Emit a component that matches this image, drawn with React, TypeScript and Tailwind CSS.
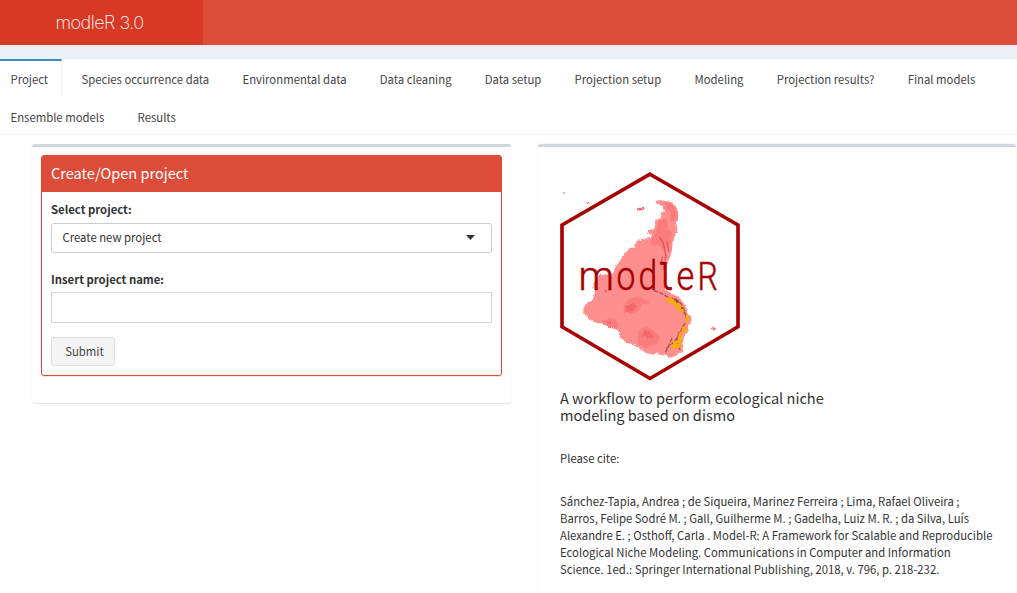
import React from "react";

const tabs = [
  "Project",
  "Species occurrence data",
  "Environmental data",
  "Data cleaning",
  "Data setup",
  "Projection setup",
  "Modeling",
  "Projection results?",
  "Final models",
  "Ensemble models",
  "Results",
];

function Header() {
  return (
    <header className="flex h-[45px] bg-[#dd4b39]">
      <div className="flex w-[203px] items-center justify-center bg-[#d73925] pr-1 text-white">
        <span className="font-['Inter','Liberation_Sans',sans-serif] text-[18px] font-extralight tracking-[-0.5px]">modleR 3.0</span>
      </div>
    </header>
  );
}

function Tabs() {
  return (
    <nav className="flex h-[76px] flex-wrap content-start gap-x-[8.75px] border-b border-[#f4f4f4]">
      {tabs.map((label, i) => (
        <a
          key={label}
          className={
            "flex h-[38px] items-center border-t-2 border-r pl-[10.5px] pr-[13px] whitespace-nowrap text-[#444] " +
            (i === 0 ? "border-t-[#3c8dbc] border-r-[#f4f4f4]" : "border-transparent")
          }
        >
          <span className="pt-px">{label}</span>
        </a>
      ))}
    </nav>
  );
}

function ProjectForm() {
  return (
    <section className="h-[259px] w-[479px] rounded-[3px] border-t-[3px] border-[#d2d6de] px-[9px] pt-2 shadow-[0_1px_1px_rgba(0,0,0,0.1),0_0_1px_rgba(0,0,0,0.1)]">
      <div className="h-[221px] rounded-[3px] border border-[#dd4b39] shadow-[0_1px_1px_rgba(0,0,0,0.1)]">
        <h3 className="flex h-9 items-center bg-[#dd4b39] px-[9px] pb-[3px] text-[14.55px] text-white">Create/Open project</h3>
        <div className="flex flex-col items-start px-[9px] pt-2">
          <label className="h-[23px] font-bold leading-[18px]">Select project:</label>
          <div className="flex h-[30px] w-full items-center justify-between rounded-[3px] border border-[#ccc] pl-[10.5px] pr-4 pb-px">
            <span>Create new project</span>
            <svg width="9" height="5" viewBox="0 0 9 5"><path d="M0 0h9L4.5 5z" fill="#333" /></svg>
          </div>
          <label className="mt-[17px] h-[22px] font-bold leading-[18px]">Insert project name:</label>
          <input className="h-[31px] w-full border border-[#d2d6de] px-3 outline-none" />
          <button className="mt-[14px] h-[29px] w-16 rounded-[3px] border border-[#ddd] bg-[#f4f4f4] pl-[3px] text-[#444]">Submit</button>
        </div>
      </div>
    </section>
  );
}

function Logo() {
  return (
    <svg width="180" height="209" viewBox="0 0 180 209" className="block">
      <filter id="coast" x="-5%" y="-5%" width="110%" height="110%">
        <feTurbulence type="fractalNoise" baseFrequency="0.2" numOctaves="2" seed="4" />
        <feDisplacementMap in="SourceGraphic" scale="9" xChannelSelector="R" yChannelSelector="G" />
      </filter>
      <g transform="translate(-10 -7) scale(0.33333)">
        <g filter="url(#coast)">
          <path
            d="M318 108l17-4 8 3 19 3 16 15 7 15-1 20-6 14 5 20-8 18-7 22-2 22-6 20-8 20-5 18 0 26-2 35 17 10 23 10 15 16 10 20 2 16 12 8 0 14-9 14-1 16-12 14-4 26 2 20-12 4-10 10-18 5-15-10-10 4-15-8-10 5-20-4-20-13-20-13-25-7-15-15-5-20-20-10-25-12-20 0-25-13-15-20 0-13 15-17 13-5 7-25-5-15 3-20 12-18 25 0 20-4 6-18 14-20 15-22 15-16 18-2-6-7 10-13 18-6 20-2 8-10-16-2 3-12 17-2 4-16-1-12 13-3 7-10-5-7 12-6-7-17-20-10z"
            fill="#ff8f8f"
          />
          <path
            d="M342 114l22 0 14 14 2 24-10 20-10-10 4-20-14-12zM325 168l22-8 8 26-16 14-22-4zM304 222l16-24 30-8 18 14-6 30-12 14-12 10-10-18-24 0zM222 420l14-18 34-8 14 12 12 0 0 10-18 2-12 20-24 8-22-6zM152 472l24-12 20 2 12 18-8 10-18 0zM264 500l16-14 20 2 18 16 12 14-8 18-18 4-20 10-20-14z"
            fill="#fb7b7d"
          />
          <path
            d="M258 131l12-3 14 1-4 6-16 2zM106 111l10 2 6 5-8-1zM480 490l10-3 7 2 1 9-8-4zM40 84h3v3h-3zM228 424l24-10 8 10-10 14-22 4zM284 496l14 2 14 18-12 4-16-8-12 4zM170 466l14 6-4 8zM164 374l6-2 2 10-6 2z"
            fill="#f5686b"
          />
        </g>
        <path
          d="M328 216l10 14 6 24 4 22-4 10M338 274l-4 16 10 8-4 16M352 230l4 30"
          fill="none" stroke="#df565b" strokeWidth="4"
        />
        <path
          d="M312 377l22 8 20 12 24 6 16 14 8 16 6 22-2 18-10 16-6 18-12 16-12 14-20 16M366 520l-20 44M388 500l-8 24 10 30"
          fill="none" stroke="#b04b50" strokeWidth="4" strokeDasharray="13 4"
        />
        <path d="M372 400l14 8 2 14 14 10 2 14-12-6-6-14-14-8z" fill="#9c4148" />
        <path
          d="M346 398h6v5h6v-6h8v4h6v6h6v6h10v6h5v13h8v12h-9v-5h-6v-5h-6v-9h-8v-7h-10v-6h-10v-6h-6zM409 444h4v7h4v16h-7v6h-5v-13h4zM398 485h12v13h-6v5h-9v-10h3zM386 503h8v8h3v10h-3v24h-8v-11h-7v-8h6zM370 527h10v9h6v12h-9v5h-7v-5h-7v-10h7z"
          fill="#f5ae08"
        />
      </g>
      <path d="M90 2.200L178 53v101.800L90 206.500 2 154.800V53z" fill="none" stroke="#a60000" strokeWidth="3.6" />
      <g fontFamily="Roboto, sans-serif" fontWeight="300" fontSize="40" fill="#a60000" stroke="#a60000" strokeWidth="0.5">
        <text transform="translate(18.5 118)">m</text>
        <text transform="translate(56.5 118) scale(0.84 1)">o</text>
        <text transform="translate(78.5 118) scale(0.84 1)">d</text>
        <text transform="translate(98 118) scale(0.72 1)" fontFamily="DejaVu Sans Mono, monospace" fontWeight="400" fontSize="38">l</text>
        <text transform="translate(116.5 118) scale(0.86 1)">e</text>
        <text transform="translate(137.500 118) scale(0.8 0.96)">R</text>
      </g>
    </svg>
  );
}

function About() {
  return (
    <section className="h-[460px] w-[478px] rounded-t-[3px] border-t-[3px] border-[#d2d6de] pl-[22px] pt-[25px] shadow-[0_0_1px_rgba(0,0,0,0.25)]">
      <Logo />
      <h4 className="mt-2 w-[290px] text-[14.55px] leading-[17px]">A workflow to perform ecological niche modeling based on dismo</h4>
      <p className="mt-[27px] leading-[17px]">Please cite:</p>
      <p className="mt-[26px] leading-[17px] whitespace-nowrap">
        Sánchez-Tapia, Andrea ; de Siqueira, Marinez Ferreira ; Lima, Rafael Oliveira ;<br />
        Barros, Felipe Sodré M. ; Gall, Guilherme M. ; Gadelha, Luiz M. R. ; da Silva, Luís<br />
        Alexandre E. ; Osthoff, Carla . Model-R: A Framework for Scalable and Reproducible<br />
        Ecological Niche Modeling. Communications in Computer and Information<br />
        Science. 1ed.: Springer International Publishing, 2018, v. 796, p. 218-232.
      </p>
    </section>
  );
}

export default function App() {
  return (
    <div className="h-[593px] w-[1017px] overflow-hidden bg-white font-['Noto_Sans_CJK_SC',sans-serif] text-[11.33px] leading-[17px] text-[#333]">
      <Header />
      <div className="h-[14px] bg-[#ecf0f5]" />
      <Tabs />
      <main className="flex items-start gap-[27px] pl-8 pt-[9px]">
        <ProjectForm />
        <About />
      </main>
    </div>
  );
}
